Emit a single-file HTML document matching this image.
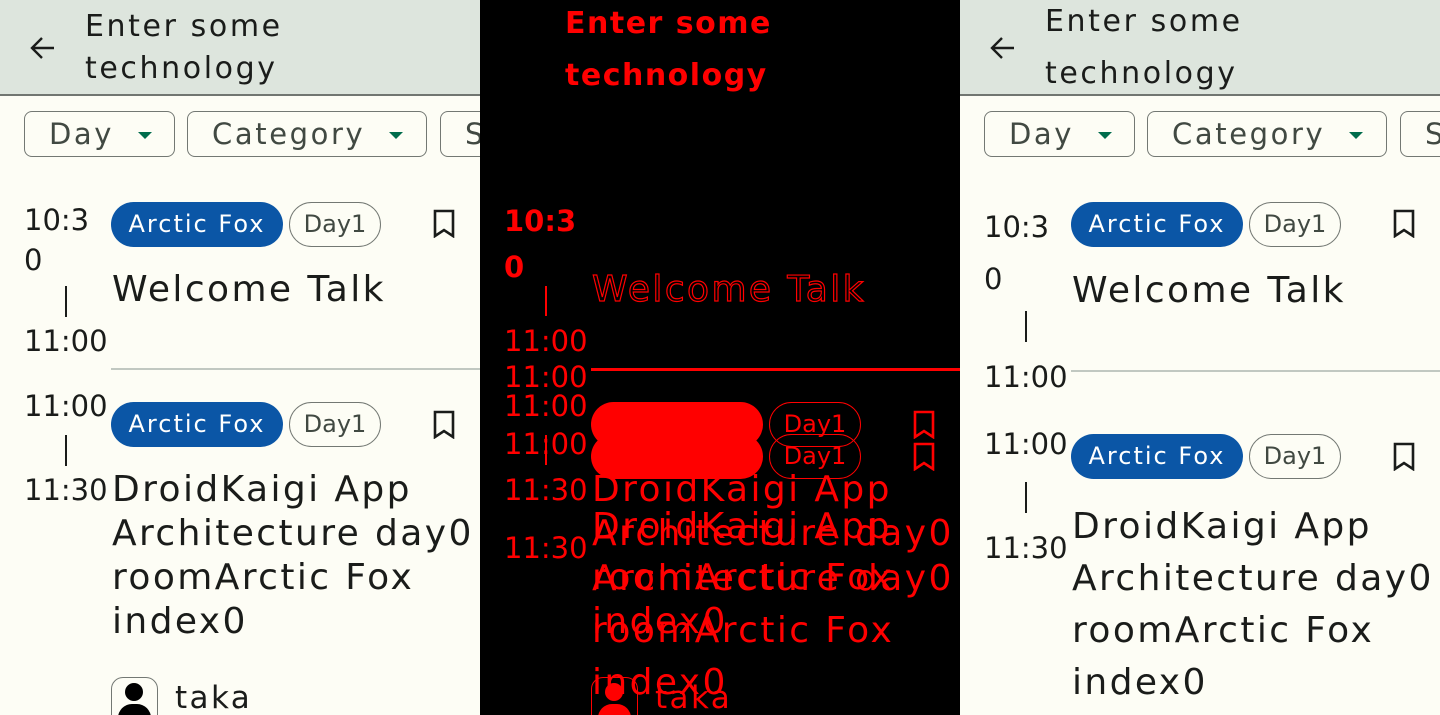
<!DOCTYPE html>
<html><head><meta charset="utf-8"><style>
*{margin:0;padding:0;box-sizing:border-box}
body{width:1440px;height:715px;overflow:hidden;background:#000;font-family:"DejaVu Sans","Liberation Sans",sans-serif;position:relative}
.p{position:absolute;top:0;width:480px;height:715px;overflow:hidden;background:#fdfdf5}
.a{position:absolute;white-space:nowrap}
.hdr{position:absolute;left:0;top:0;width:480px;height:96px;background:#dde5dd;border-bottom:2px solid #717671}
.ttl{font-size:30px;color:#1a1c1a;left:85px;letter-spacing:2.6px}
.chip{position:absolute;top:111px;height:46px;border:1.5px solid #737873;border-radius:8px}
.chip span{position:absolute;top:5px;font-size:29px;color:#414942;letter-spacing:2.6px}
.tri{position:absolute;top:20px;width:0;height:0;border-left:7px solid transparent;border-right:7px solid transparent;border-top:7px solid #006c4c}
.tm{font-size:29px;color:#1a1c1a;left:24px;letter-spacing:0;line-height:34px}
.bar{position:absolute;left:65px;width:2px;background:#1a1c1a}
.pill{position:absolute;left:111px;width:172px;height:45px;border-radius:23px;background:#0b56a6;color:#fff;font-size:24px;line-height:45px;text-align:center;letter-spacing:2px}
.d1{position:absolute;left:289px;width:92px;height:45px;border-radius:23px;border:1.5px solid #737873;color:#414942;font-size:24px;line-height:42px;text-align:center}
.big{font-size:36px;color:#1a1c1a;left:112px;letter-spacing:2.4px}
.div{position:absolute;left:111px;width:369px;height:2px;background:#c1c8c1}
</style></head><body>

<!-- LEFT PANEL -->
<div class="p" style="left:0">
  <div class="hdr"></div>
  <svg class="a" style="left:29px;top:36px" width="26" height="24" viewBox="0 0 26 24"><path d="M25 12H3M13 2L3 12l10 10" fill="none" stroke="#1a1c1a" stroke-width="2.4"/></svg>
  <div class="a ttl" style="top:6px;line-height:42px">Enter some<br>technology</div>
  <div class="chip" style="left:24px;width:151px"><span style="left:24px">Day</span><div class="tri" style="left:113px"></div></div>
  <div class="chip" style="left:187px;width:240px"><span style="left:24px">Category</span><div class="tri" style="left:201px"></div></div>
  <div class="chip" style="left:440px;width:100px"><span style="left:24px">S</span></div>

  <div class="a tm" style="top:200px;line-height:40px">10:3<br>0</div>
  <div class="bar" style="top:286px;height:31px"></div>
  <div class="a tm" style="top:324px">11:00</div>
  <div class="pill" style="top:202px">Arctic Fox</div>
  <div class="d1" style="top:202px">Day1</div>
  <svg class="a" style="left:433px;top:209px" width="22" height="29" viewBox="0 0 22 29"><path d="M2 2h18v25l-9-6-9 6z" fill="none" stroke="#1a1c1a" stroke-width="2.6"/></svg>
  <div class="a big" style="top:269px">Welcome Talk</div>
  <div class="div" style="top:368px"></div>

  <div class="a tm" style="top:389px">11:00</div>
  <div class="bar" style="top:435px;height:31px"></div>
  <div class="a tm" style="top:473px">11:30</div>
  <div class="pill" style="top:402px">Arctic Fox</div>
  <div class="d1" style="top:402px">Day1</div>
  <svg class="a" style="left:433px;top:410px" width="22" height="29" viewBox="0 0 22 29"><path d="M2 2h18v25l-9-6-9 6z" fill="none" stroke="#1a1c1a" stroke-width="2.6"/></svg>
  <div class="a big" style="top:468px;line-height:44px">DroidKaigi App<br>Architecture day0<br>roomArctic Fox<br>index0</div>
  <div class="a" style="left:111px;top:677px;width:47px;height:50px;border:1.5px solid #737873;border-radius:12px;overflow:hidden;background:#fdfdf5">
    <div class="a" style="left:13px;top:5px;width:18px;height:18px;border-radius:50%;background:#000"></div>
    <div class="a" style="left:6px;top:26px;width:33px;height:20px;border-radius:14px 14px 0 0;background:#000"></div>
  </div>
  <div class="a big" style="left:175px;top:680px;font-size:31px">taka</div>
</div>

<!-- MIDDLE DIFF PANEL -->
<div class="p" style="left:480px;background:#000;color:#f00">
  <div class="a ttl" style="top:-2px;line-height:52px;color:#f00;left:85px;font-weight:bold;letter-spacing:1.5px">Enter some<br>technology</div>
  <div class="a tm" style="top:198px;color:#f00;line-height:46px;font-weight:bold">10:3<br>0</div>
  <div class="bar" style="top:286px;height:30px;background:#f00"></div>
  <div class="a tm" style="top:324px;color:#f00">11:00</div>
  <div class="a tm" style="top:360px;color:#f00">11:00</div>
  <div class="a tm" style="top:389px;color:#f00">11:00</div>
  <div class="a tm" style="top:427px;color:#f00">11:00</div>
  <div class="bar" style="top:435px;height:30px;background:#f00"></div>
  <div class="a tm" style="top:473px;color:#f00">11:30</div>
  <div class="a tm" style="top:531px;color:#f00">11:30</div>
  <div class="a big" style="top:269px;color:transparent;-webkit-text-stroke:1.2px #f00">Welcome Talk</div>
  <div class="a" style="left:111px;top:368px;width:369px;height:3px;background:#f00"></div>
  <div class="pill" style="top:402px;background:#f00;color:#000"></div>
  <div class="pill" style="top:434px;background:#f00;color:#000"></div>
  <div class="d1" style="top:402px;border-color:#f00;color:#f00">Day1</div>
  <div class="d1" style="top:434px;border-color:#f00;color:#f00">Day1</div>
  <svg class="a" style="left:433px;top:410px" width="22" height="29" viewBox="0 0 22 29"><path d="M2 2h18v25l-9-6-9 6z" fill="none" stroke="#f00" stroke-width="2.6"/></svg>
  <svg class="a" style="left:433px;top:442px" width="22" height="29" viewBox="0 0 22 29"><path d="M2 2h18v25l-9-6-9 6z" fill="none" stroke="#f00" stroke-width="2.6"/></svg>
  <div class="a big" style="top:468px;line-height:44px;color:#f00">DroidKaigi App<br>Architecture day0<br>roomArctic Fox<br>index0</div>
  <div class="a big" style="top:501px;line-height:52px;color:#f00">DroidKaigi App<br>Architecture day0<br>roomArctic Fox<br>index0</div>
  <div class="a" style="left:111px;top:677px;width:47px;height:50px;border:1.5px solid #f00;border-radius:12px;overflow:hidden">
    <div class="a" style="left:13px;top:5px;width:18px;height:18px;border-radius:50%;background:#f00"></div>
    <div class="a" style="left:6px;top:26px;width:33px;height:20px;border-radius:14px 14px 0 0;background:#f00"></div>
  </div>
  <div class="a big" style="left:175px;top:680px;font-size:31px;color:#f00">taka</div>
</div>

<!-- RIGHT PANEL -->
<div class="p" style="left:960px">
  <div class="hdr"></div>
  <svg class="a" style="left:29px;top:36px" width="26" height="24" viewBox="0 0 26 24"><path d="M25 12H3M13 2L3 12l10 10" fill="none" stroke="#1a1c1a" stroke-width="2.4"/></svg>
  <div class="a ttl" style="top:-4px;line-height:52px">Enter some<br>technology</div>
  <div class="chip" style="left:24px;width:151px"><span style="left:24px">Day</span><div class="tri" style="left:113px"></div></div>
  <div class="chip" style="left:187px;width:240px"><span style="left:24px">Category</span><div class="tri" style="left:201px"></div></div>
  <div class="chip" style="left:440px;width:100px"><span style="left:24px">S</span></div>

  <div class="a tm" style="top:201px;line-height:52px">10:3<br>0</div>
  <div class="bar" style="top:311px;height:31px"></div>
  <div class="a tm" style="top:360px">11:00</div>
  <div class="pill" style="top:202px">Arctic Fox</div>
  <div class="d1" style="top:202px">Day1</div>
  <svg class="a" style="left:433px;top:209px" width="22" height="29" viewBox="0 0 22 29"><path d="M2 2h18v25l-9-6-9 6z" fill="none" stroke="#1a1c1a" stroke-width="2.6"/></svg>
  <div class="a big" style="top:270px">Welcome Talk</div>
  <div class="div" style="top:370px"></div>

  <div class="a tm" style="top:427px">11:00</div>
  <div class="bar" style="top:482px;height:31px"></div>
  <div class="a tm" style="top:531px">11:30</div>
  <div class="pill" style="top:434px">Arctic Fox</div>
  <div class="d1" style="top:434px">Day1</div>
  <svg class="a" style="left:433px;top:442px" width="22" height="29" viewBox="0 0 22 29"><path d="M2 2h18v25l-9-6-9 6z" fill="none" stroke="#1a1c1a" stroke-width="2.6"/></svg>
  <div class="a big" style="top:501px;line-height:52px">DroidKaigi App<br>Architecture day0<br>roomArctic Fox<br>index0</div>
</div>
</body></html>
